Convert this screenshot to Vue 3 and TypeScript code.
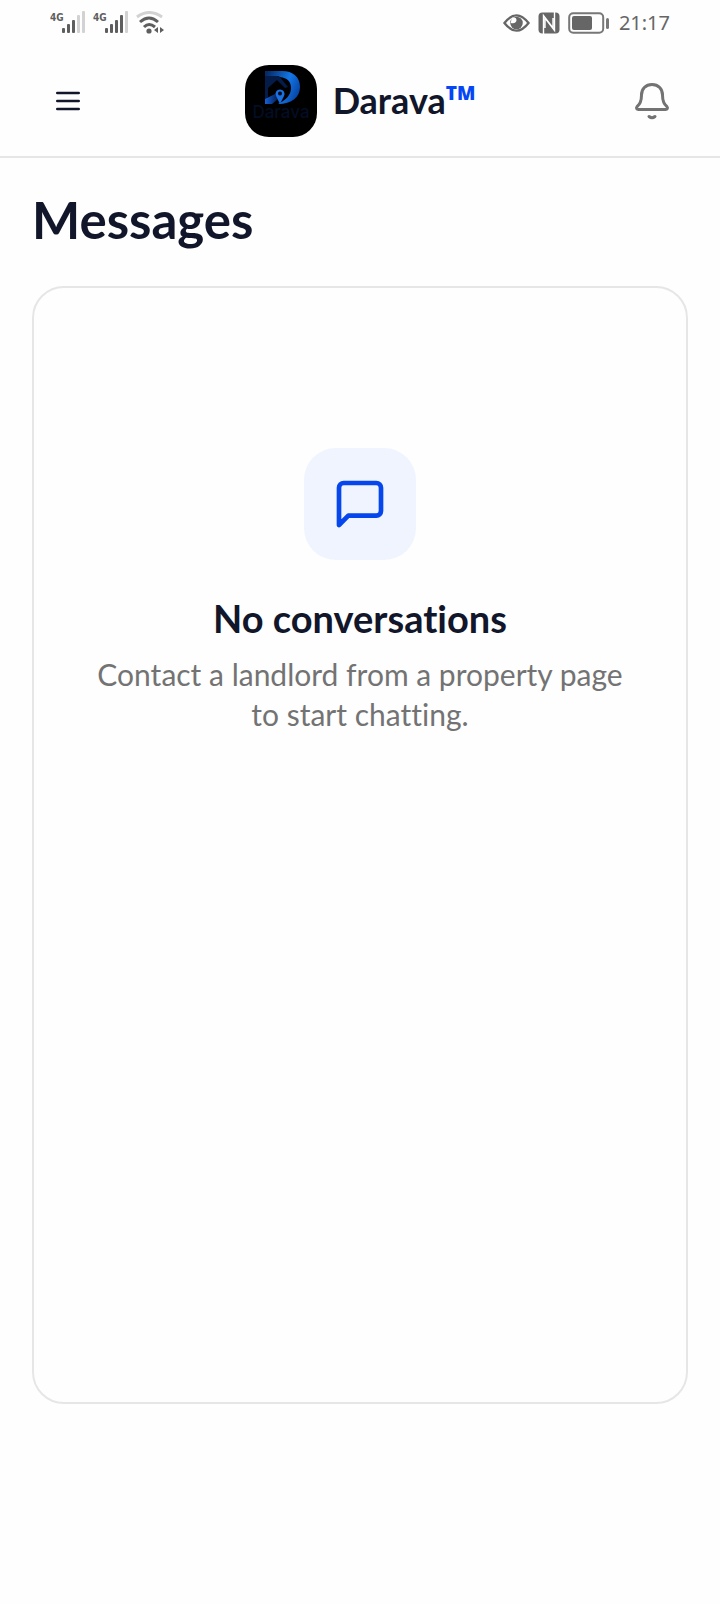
<script setup lang="ts">
interface Signal {
  id: string
  active: number
}

const signals: Signal[] = [
  { id: 'sim-1', active: 3 },
  { id: 'sim-2', active: 4 },
]
const bars = [1, 2, 3, 4, 5]
</script>

<template>
  <div class="page">
    <div class="status">
      <div class="status-group">
        <svg v-for="signal in signals" :key="signal.id" width="37" height="24" viewBox="0 0 37 24" aria-hidden="true">
          <text x="0" y="10" class="net">4G</text>
          <rect
            v-for="bar in bars"
            :key="bar"
            :x="7 + bar * 5"
            :y="[0, 17, 13, 9, 4, 0][bar]"
            width="3"
            :height="[0, 5, 9, 13, 18, 22][bar]"
            rx="1"
            :fill="bar <= signal.active ? '#5e5e5e' : '#d2d2d2'"
          />
        </svg>
        <svg width="28" height="24" viewBox="0 0 28 24" fill="none" stroke-width="3" aria-hidden="true">
          <path d="M1 6Q13-3 26 6" stroke="#d2d2d2" />
          <path d="M4 11Q13 3 22 11M8 16Q13 11 19 16" stroke="#5e5e5e" />
          <circle cx="13" cy="20" r="2.6" fill="#5e5e5e" />
          <path d="M22 16v6l-4-3zM24 16v6l4-3z" fill="#5e5e5e" />
        </svg>
      </div>
      <div class="status-group right">
        <svg width="27" height="20" viewBox="0 0 28 20" aria-hidden="true">
          <path d="M1.500 10Q14-6 26.500 10Q14 26 1.500 10Z" fill="none" stroke="#666" stroke-width="2.400" />
          <circle cx="14" cy="10" r="6.500" fill="#666" />
          <path d="M9 5q5-2 5 2t-6 3z" fill="#fff" />
        </svg>
        <svg width="22" height="22" viewBox="0 0 22 22" aria-hidden="true">
          <rect x="0.500" y="0.500" width="21" height="21" rx="4" fill="#666" />
          <path d="M5.500 22V3.500L15 16V6M16.500 0v18.500L7 6V16" fill="none" stroke="#fff" stroke-width="1.400" />
        </svg>
        <svg width="41" height="22" viewBox="0 0 41 22" aria-hidden="true">
          <rect x="1.200" y="1.200" width="34" height="19.600" rx="4" fill="none" stroke="#777" stroke-width="2" />
          <rect x="4" y="4" width="20" height="14" rx="2" fill="#666" />
          <rect x="38" y="6" width="3" height="11" rx="1.500" fill="#777" />
        </svg>
        <span class="time">21:17</span>
      </div>
    </div>

    <header class="header">
      <button class="icon-button" type="button" aria-label="Menu">
        <svg width="24" height="20" viewBox="0 0 24 20" stroke="#11162a" stroke-width="2.600" stroke-linecap="round">
          <path d="M1.300 2h21.400M1.300 10h21.400M1.300 18h21.400" />
        </svg>
      </button>
      <a class="brand" href="#">
        <svg class="logo" width="72" height="72" viewBox="0 0 72 72" aria-hidden="true">
          <defs>
            <linearGradient id="mark" x1="0" y1="0.200" x2="1" y2="0.600">
              <stop offset="0" stop-color="#062a66" />
              <stop offset="0.600" stop-color="#1477e6" />
              <stop offset="1" stop-color="#0644a5" />
            </linearGradient>
            <linearGradient id="base" x1="0" y1="0" x2="1" y2="0">
              <stop offset="0" stop-color="#1262da" />
              <stop offset="1" stop-color="#061c50" />
            </linearGradient>
          </defs>
          <rect width="72" height="72" rx="24" fill="#000" />
          <path d="M20 6h17c11 0 18 6 18 16S47 39 33 39c8-4 13-9 13-16S42 13 35 12H20z" fill="url(#mark)" />
          <path d="M20 11h14l9 11-3 1-8-8-9 8v9l-3 4z" fill="#051c48" />
          <path d="M20 39v-5l10-5 3 5-6 5z" fill="url(#base)" />
          <path d="M35 39l-4-8a4.500 4.500 0 1 1 8 0z" fill="#1a70df" />
          <circle cx="35" cy="28.500" r="2" fill="#020a1c" />
          <text x="36" y="53" class="logo-text" text-anchor="middle">Darava</text>
        </svg>
        <span class="brand-name">Darava<span class="tm">TM</span></span>
      </a>
      <button class="icon-button" type="button" aria-label="Notifications">
        <svg width="40" height="40" viewBox="0 0 40 40" fill="none" stroke="#737373" stroke-width="3" stroke-linecap="round" stroke-linejoin="round">
          <path d="M20 3.500C13.500 3.500 9.500 8 9.500 14C9.500 21 7.500 23 5.200 25.500C3.800 27.200 4.700 28.500 6.500 28.500H33.500C35.300 28.500 36.200 27.200 34.800 25.500C32.500 23 30.500 21 30.500 14C30.500 8 26.500 3.500 20 3.500Z" />
          <path d="M17 35.500q3 2.400 6 0" />
        </svg>
      </button>
    </header>

    <main class="main">
      <h1 class="title">Messages</h1>
      <section class="card">
        <div class="bubble">
          <svg width="56" height="56" viewBox="0 0 24 24" fill="none" stroke="#0546ed" stroke-width="2" stroke-linecap="round" stroke-linejoin="round" aria-hidden="true">
            <path d="M21 15a2 2 0 0 1-2 2H7l-4 4V5a2 2 0 0 1 2-2h14a2 2 0 0 1 2 2z" />
          </svg>
        </div>
        <h2 class="card-title">No conversations</h2>
        <p class="card-text">Contact a landlord from a property page to start chatting.</p>
      </section>
    </main>
  </div>
</template>

<style>
body {
  background: #fefefe;
}
</style>

<style scoped>
.page {
  box-sizing: border-box;
  min-height: 100vh;
  display: flex;
  flex-direction: column;
  font-family: Lato, "Liberation Sans", sans-serif;
  font-variant-ligatures: none;
  color: #11162a;
}
.status {
  height: 46px;
  padding: 0 50px;
  display: flex;
  align-items: center;
  justify-content: space-between;
}
.status-group {
  display: flex;
  align-items: center;
  gap: 6px;
}
.right {
  gap: 8px;
}
.net {
  font-family: "DejaVu Sans Condensed", Roboto, sans-serif;
  font-size: 10px;
  font-weight: 700;
  fill: #5e5e5e;
}
.time {
  margin-left: 2px;
  font-family: "Noto Sans", sans-serif;
  font-size: 20px;
  line-height: 24px;
  color: #666;
}
.header {
  height: 110px;
  padding: 0 32px;
  display: flex;
  align-items: center;
  justify-content: space-between;
  border-bottom: 2px solid #e6e6e6;
}
.icon-button {
  width: 72px;
  height: 72px;
  padding: 0;
  border: 0;
  background: none;
  display: flex;
  align-items: center;
  justify-content: center;
}
.brand {
  display: flex;
  align-items: center;
  gap: 16px;
  color: inherit;
  text-decoration: none;
}
.logo-text {
  font-family: Inter, sans-serif;
  font-size: 17px;
  font-weight: 500;
  fill: #030d24;
}
.brand-name {
  display: flex;
  align-items: flex-start;
  padding-bottom: 2px;
  font-size: 36px;
  line-height: 42px;
  font-weight: 700;
}
.tm {
  font-family: "Open Sans", sans-serif;
  font-size: 19px;
  line-height: 28px;
  font-weight: 800;
  color: #0546f5;
}
.main {
  flex: 1;
  display: flex;
  flex-direction: column;
  padding: 30px 32px 200px;
}
.title {
  margin: 0 0 34px;
  font-size: 51px;
  line-height: 64px;
  font-weight: 700;
}
.card {
  flex: 1;
  display: flex;
  flex-direction: column;
  align-items: center;
  padding: 160px 48px 48px;
  border: 2px solid #e6e6e6;
  border-radius: 32px;
  text-align: center;
}
.bubble {
  width: 112px;
  height: 112px;
  display: flex;
  align-items: center;
  justify-content: center;
  border-radius: 32px;
  background: #eff4ff;
}
.card-title {
  margin: 34px 0 12px;
  font-size: 38px;
  line-height: 48px;
  font-weight: 700;
}
.card-text {
  margin: 0;
  max-width: 540px;
  font-size: 30px;
  line-height: 40px;
  color: #737373;
}
</style>
